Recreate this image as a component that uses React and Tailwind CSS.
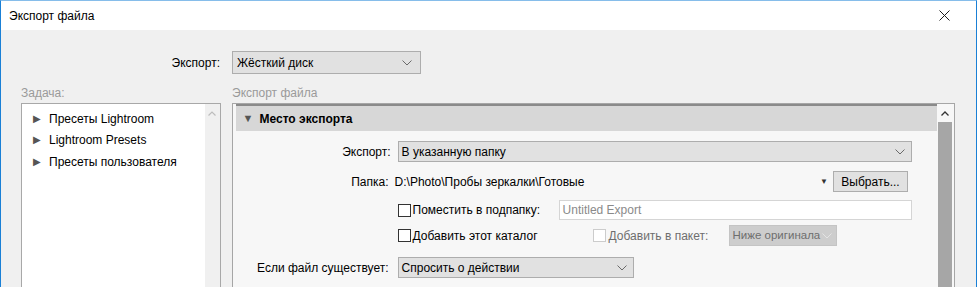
import React from 'react';

const Chevron = ({ className = '' }) => (
  <svg width="10" height="6" viewBox="0 0 10 6" className={`shrink-0 ${className}`}>
    <path d="M0.5 0.5 L5 5 L9.5 0.5" fill="none" stroke="currentColor" strokeWidth="1" />
  </svg>
);

const Select = ({ value, className = '' }) => (
  <div className={`flex items-center justify-between border border-[#adadad] bg-[#e1e1e1] pl-[3px] pr-[6px] ${className}`}>
    <span className="whitespace-nowrap">{value}</span>
    <Chevron className="text-[#6a6a6a]" />
  </div>
);

const Checkbox = ({ disabled }) => (
  <span
    className={`inline-block h-[13px] w-[13px] shrink-0 border bg-white ${
      disabled ? 'border-[#cccccc]' : 'border-[#333333]'
    }`}
  />
);

const presets = ['Пресеты Lightroom', 'Lightroom Presets', 'Пресеты пользователя'];

export default function App() {
  return (
    <div
      className="flex h-[287px] w-[977px] flex-col overflow-hidden border-x border-t border-x-[#1a80d6] border-t-[#86bdea] text-[12px] text-[#000]"
      style={{ fontFamily: '"Segoe UI", "Liberation Sans", sans-serif' }}
    >
      {/* Title bar */}
      <div className="flex h-[29px] shrink-0 items-center justify-between bg-white pl-[8px] pr-[26px]">
        <span>Экспорт файла</span>
        <svg width="11" height="11" viewBox="0 0 11 11">
          <path d="M0.5 0.5 L10.5 10.5 M10.5 0.5 L0.5 10.5" stroke="#1e1e1e" strokeWidth="1" />
        </svg>
      </div>

      {/* Body */}
      <div className="flex flex-1 flex-col bg-[#f0f0f0] pl-[20px] pr-[21px]">
        {/* Export target */}
        <div className="mt-[21px] flex items-center gap-[11px]">
          <div className="w-[200px] pr-[1px] text-right">Экспорт:</div>
          <Select value="Жёсткий диск" className="h-[23px] w-[189px] pl-[4px] pr-[8px]" />
        </div>

        <div className="mt-[11px] flex gap-[11px] leading-[16px] text-[#9a9a9a]">
          <div className="w-[200px]">Задача:</div>
          <div>Экспорт файла</div>
        </div>

        <div className="mt-[2px] flex flex-1 gap-[11px]">
          {/* Preset list */}
          <div className="flex h-[200px] w-[200px] border border-[#a8a8a8] bg-white">
            <div className="flex-1 pt-[4px]">
              {presets.map((p) => (
                <div key={p} className="flex h-[21.5px] items-center">
                  <span className="ml-[11px] mr-[8px] text-[10px] leading-none text-[#555555]">▶</span>
                  <span className="whitespace-nowrap">{p}</span>
                </div>
              ))}
            </div>
            <div className="flex w-[15px] justify-center bg-[#f0f0f0] pt-[7px]">
              <svg width="8" height="5" viewBox="0 0 8 5">
                <path d="M0.5 4.5 L4 1 L7.5 4.5" fill="none" stroke="#bdbdbd" strokeWidth="1.2" />
              </svg>
            </div>
          </div>

          {/* Export settings panel */}
          <div className="flex h-[200px] w-[725px] border border-[#a6a6a6] bg-[#f7f7f7]">
            <div className="flex flex-1 flex-col pl-[3px]">
              <div className="h-[2px] bg-[#8a8a8a]" />
              <div className="flex h-[25px] items-center bg-[#d7d7d7] font-bold">
                <span className="ml-[7px] mr-[6px] text-[11px] font-normal text-[#555555]">▼</span>
                <span>Место экспорта</span>
              </div>

              <div className="pr-[25px]">
                <div className="mt-[10px] flex h-[21px] items-center">
                  <div className="w-[162px] pr-[7px] text-right">Экспорт:</div>
                  <Select value="В указанную папку" className="h-[21px] flex-1" />
                </div>

                <div className="mt-[9px] flex h-[21px] items-center">
                  <div className="w-[159px] pr-[6px] text-right">Папка:</div>
                  <div className="flex-1 whitespace-nowrap">D:\Photo\Пробы зеркалки\Готовые</div>
                  <span className="mr-[5px] text-[8px] leading-none text-[#333333]">▼</span>
                  <div className="mr-[4px] flex h-[21px] w-[75px] items-center justify-center border border-[#adadad] bg-[#e1e1e1]">
                    Выбрать...
                  </div>
                </div>

                <div className="mt-[8px] flex h-[20px] items-center">
                  <div className="w-[162px]" />
                  <Checkbox />
                  <span className="ml-[2px] w-[146px] whitespace-nowrap">Поместить в подпапку:</span>
                  <div className="flex h-[20px] flex-1 items-center border border-[#d5d5d5] bg-white pl-[3px] text-[#8a8a8a]">
                    Untitled Export
                  </div>
                </div>

                <div className="mt-[5px] flex h-[21px] items-center">
                  <div className="w-[162px]" />
                  <Checkbox />
                  <span className="ml-[2px] w-[180px] whitespace-nowrap">Добавить этот каталог</span>
                  <Checkbox disabled />
                  <span className="ml-[3px] w-[120px] whitespace-nowrap text-[#6e6e6e]">Добавить в пакет:</span>
                  <div className="flex h-[21px] w-[108px] items-center justify-between gap-[2px] overflow-hidden border border-[#c4c4c4] bg-[#cdcdcd] pl-[3px] pr-[4px] text-[11.5px] text-[#6e6e6e]">
                    <span className="whitespace-nowrap">Ниже оригинала</span>
                    <Chevron className="text-[#e4e4e4]" />
                  </div>
                </div>

                <div className="mt-[11px] flex h-[21px] items-center">
                  <div className="w-[162px] whitespace-nowrap pr-[9px] text-right">Если файл существует:</div>
                  <Select value="Спросить о действии" className="h-[21px] w-[236px]" />
                </div>
              </div>
            </div>

            {/* Scrollbar */}
            <div className="mr-[2px] flex w-[15px] flex-col">
              <div className="flex h-[18px] items-center justify-center">
                <svg width="8" height="5" viewBox="0 0 8 5">
                  <path d="M0.5 4.5 L4 1 L7.5 4.5" fill="none" stroke="#333333" strokeWidth="1.3" />
                </svg>
              </div>
              <div className="ml-[1px] flex-1 bg-[#a6a6a6]" />
            </div>
          </div>
        </div>
      </div>
    </div>
  );
}
